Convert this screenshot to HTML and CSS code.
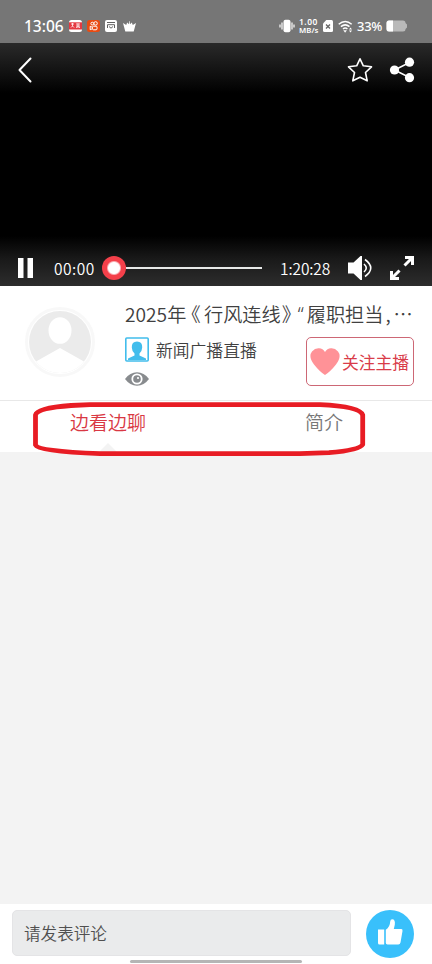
FILE: index.html
```html
<!DOCTYPE html>
<html lang="zh-CN">
<head>
<meta charset="utf-8">
<meta name="viewport" content="width=device-width, initial-scale=1">
<title>新闻广播直播</title>
<link rel="stylesheet" href="styles.css">
</head>
<body>
<div class="app">
  <header class="status">
    <span class="clock">13:06</span>
    <svg class="notif" width="68" height="14" viewBox="0 0 68 14">
      <rect x="0" y="1" width="13" height="12" rx="2.5" fill="#fff"/>
      <rect x="0" y="3.3" width="13" height="7.2" fill="#e53a41"/>
      <path d="M2 5h3M3.5 4v3M2 8.5l1.5-1.5L5 8.5M7 5h4M7 7h4M9 4.5V9M7.3 9l1-1.5M10.8 9l-1-1.5" stroke="#fff" stroke-width=".8" fill="none"/>
      <rect x="18" y="1" width="13" height="12" rx="2.5" fill="#e94b12"/>
      <g fill="none" stroke="#fff" stroke-width="1"><circle cx="23.3" cy="4.6" r="1.4"/><circle cx="26.6" cy="4.4" r="1.7"/><rect x="23.5" y="7.2" width="4.5" height="3.6" rx="1"/><path d="M23.2 8.2l-2-.9v3.4l2-.9"/></g>
      <rect x="36" y="1" width="12" height="12" rx="2" fill="#fff"/>
      <path d="M38 3.5h8M38.500 9V5.700h7V9M40 7.500l2 1.700 2-1.700" stroke="#626262" fill="none"/>
      <path d="M54 4l3.200 2 1-2.500L60 5.300l.3-3.300h.4l.3 3.300 1.800-1.800 1 2.500L67 4l-2.300 8.500h-8.400z" fill="#fff"/>
    </svg>
    <div class="system">
      <svg width="16" height="14" viewBox="0 0 16 14"><rect x="4.500" y=".8" width="7" height="12.400" rx="2" fill="#fff"/><path d="M3 3.500v7M13 3.500v7M1 5.500v3M15 5.500v3" stroke="#fff" stroke-width="1.200"/></svg>
      <div class="speed"><span class="rate">1.00</span><span class="unit">MB/s</span></div>
      <svg class="sim" width="10" height="12" viewBox="0 0 10 12"><path d="M3.300 0H8.500Q10 0 10 1.500v9Q10 12 8.500 12h-7Q0 12 0 10.500V3.500z" fill="#fff"/><path d="M3 4.500l4 4M7 4.500l-4 4" stroke="#666" stroke-width="1.300"/></svg>
      <svg class="wifi" width="16" height="13" viewBox="0 0 16 13"><g fill="none" stroke="#fff" stroke-width="1.500"><path d="M.7 4.200q6.500-5.500 13 0M2.900 6.700q4.300-3.600 8.600 0M5 9q2.200-1.800 4.400 0"/></g><path d="M5.300 10.300h3.600l-1.800 2.400z" fill="#fff"/><path d="M11 9.500l1.500-2L14 9.500zM11 10.500h3l-1.500 2z" fill="#fff"/></svg>
      <span class="percent">33%</span>
      <svg class="battery" width="22" height="12" viewBox="0 0 22 12"><path d="M3 .5h14q2.500 0 2.500 2.500l1.500 1.500v3L19.500 9q0 2.500-2.500 2.500H3Q.5 11.500.5 9V3Q.5.500 3 .5z" fill="#b9b9b9"/><path d="M7 .5H3Q.5.500.5 3v6q0 2.500 2.500 2.500h4z" fill="#fff"/></svg>
    </div>
  </header>

  <section class="player">
    <div class="player-top">
      <svg width="14" height="26" viewBox="0 0 14 26"><path d="M12.500 1.500L1.500 13l11 11.500" fill="none" stroke="#fff" stroke-width="2" stroke-linecap="round" stroke-linejoin="round"/></svg>
      <svg class="star" width="26" height="26" viewBox="0 0 26 26"><path d="M13 1.800l3.300 7 8.200 1-6 5.700 1.700 8.300-7.200-3.600-7.200 3.600 1.700-8.300-6-5.700 8.200-1z" fill="none" stroke="#fff" stroke-width="1.600" stroke-linejoin="round"/></svg>
      <svg class="share" width="26" height="26" viewBox="0 0 26 26"><path d="M20.500 5.500L5.500 13l15 7.500" fill="none" stroke="#fff" stroke-width="1.500"/><g fill="#fff"><circle cx="20.500" cy="5.200" r="4.600"/><circle cx="5.500" cy="13" r="4.600"/><circle cx="20.500" cy="20.700" r="4.600"/></g></svg>
    </div>
    <div class="player-bottom">
      <svg width="16" height="20" viewBox="0 0 16 20"><path d="M0 0h5.500v20H0zM9.500 0H15v20H9.500z" fill="#fff"/></svg>
      <span class="time current">00:00</span>
      <div class="seek"><span class="knob"></span><span class="track"></span></div>
      <span class="time total">1:20:28</span>
      <svg class="volume" width="25" height="24" viewBox="0 0 25 24"><path d="M0 6.500h5.500L12.500 0H14v24h-1.500l-7-6.500H0z" fill="#fff"/><path d="M16 8q4.500 4 0 8M17 3.500q11.500 8.500 0 17" fill="none" stroke="#fff" stroke-width="1.600"/></svg>
      <svg class="expand" width="24" height="24" viewBox="0 0 24 24"><path d="M15 1.500h7.500V9M22 2l-7.500 7.500M1.500 15v7.500H9M2 22l7.500-7.500" fill="none" stroke="#fff" stroke-width="3"/></svg>
    </div>
  </section>

  <section class="info">
    <div class="avatar"><svg width="70" height="70" viewBox="0 0 70 70"><defs><clipPath id="face"><circle cx="35" cy="35" r="31"/></clipPath></defs><circle cx="35" cy="35" r="33.500" fill="#fff" stroke="#f8f8f8" stroke-width="3"/><circle cx="35" cy="35" r="31" fill="#ebebeb"/><ellipse cx="35" cy="23.500" rx="11.500" ry="13.300" fill="#fff"/><path d="M0 64L11 54.500 35 41l24 13.500L70 64v6H0z" fill="#fff" clip-path="url(#face)"/></svg></div>
    <div class="details">
      <h1 class="title"><span class="year">2025年</span><span class="book-open">《</span><span>行风连线</span><span class="book-close">》</span><span class="quote">“</span><span>履职担当</span><span class="comma">,</span><span class="more">…</span></h1>
      <div class="host">
        <div class="meta">
          <div class="channel">
            <svg width="24" height="25" viewBox="0 0 24 25"><rect x=".8" y="1" width="22.400" height="23" rx="1" fill="#fff" stroke="#42bdec" stroke-width="1.600"/><path d="M12 4.500q5.500 0 5.200 6-.2 4-2.700 6v2l6.500 3V23H3v-1.500l6.500-3v-2q-2.500-2-2.700-6-.3-6 5.200-6z" fill="#42bdec"/></svg>
            <span>新闻广播直播</span>
          </div>
          <svg class="eye" width="24" height="14" viewBox="0 0 24 14"><path d="M0 7Q5 .3 12 .3T24 7q-5 6.700-12 6.700T0 7z" fill="#888b8e"/><circle cx="12" cy="7" r="4.700" fill="none" stroke="#fff" stroke-width="1.800"/><circle cx="13" cy="6" r="1.100" fill="#fff"/></svg>
        </div>
        <button class="follow"><svg width="30" height="27" viewBox="0 0 30 27"><path d="M15 27Q10 24 4 16.500-2 8.500 2 3.500 5 0 9 .3q4 .3 6 3.700Q17 .6 21 .3q4-.3 7 3.200 4 5-2 13Q20 24 15 27z" fill="#ff9297"/></svg><span>关注主播</span></button>
      </div>
    </div>
  </section>

  <nav class="tabs">
    <span class="tab active">边看边聊</span>
    <span class="tab">简介</span>
    <svg class="tab-arrow" width="18" height="9" viewBox="0 0 18 9"><path d="M0 9l9-9 9 9z" fill="#f3f3f3"/></svg>
    <svg class="marker" width="340" height="60" viewBox="0 0 340 60"><path d="M5.500 15Q7 8 41 5.500L60 4.700H290Q330 6.500 332.700 15V44.500Q330 50 299 52.700L270 53.700H70Q8 51.500 5.500 45z" fill="none" stroke="#e81c24" stroke-width="4.800" stroke-linejoin="round"/></svg>
  </nav>

  <main class="chat"></main>

  <footer class="composer">
    <div class="input">请发表评论</div>
    <div class="like"><svg width="25" height="26" viewBox="0 0 25 26"><path d="M0 10.500h6.200v15H1.500Q0 25.500 0 24zM7.800 10.700Q12 8 12.200 2.500 12.400.3 14.200.3q3.300 0 2.600 5.500l-1 4.200h7.500q1.500 0 1.200 2l-2 11.500q-.4 2-2.200 2H9.500q-1.700 0-1.700-1.700z" fill="#fff"/></svg></div>
    <span class="home-bar"></span>
  </footer>
</div>
</body>
</html>
```
FILE: styles.css
```css
* { box-sizing: border-box; }
body { margin: 0; font-family: "Noto Sans CJK SC", sans-serif; font-weight: 350; background: #f3f3f3; }
svg { display: block; flex: none; }
span { white-space: nowrap; }
.app { width: 432px; height: 964px; display: flex; flex-direction: column; overflow: hidden; }

.status { height: 43px; flex: none; display: flex; align-items: center; background: #767676; color: #fff; padding: 9px 24px 0; font-family: "Noto Sans", sans-serif; font-weight: 500; }
.clock { width: 45px; font-size: 15.5px; line-height: 20px; }
.system { display: flex; align-items: center; margin-left: 142px; }
.speed { width: 20px; margin-left: 4px; display: flex; flex-direction: column; line-height: 8px; font-weight: 600; }
.rate { font-size: 8.5px; letter-spacing: .5px; }
.unit { font-size: 7.8px; }
.sim { margin-left: 4px; }
.wifi { margin-left: 5px; }
.percent { width: 26px; margin-left: 3px; font-size: 13px; line-height: 18px; letter-spacing: -.3px; }
.battery { margin-left: 3px; }

.player { height: 243px; flex: none; display: flex; flex-direction: column; justify-content: space-between; background: linear-gradient(#2a2a2a 0, #000 50px, #000 193px, #191919 216px, #2d2d2d 243px); }
.player-top { height: 54px; display: flex; align-items: center; padding: 0 17px 0 18px; }
.star { margin-left: auto; }
.share { margin-left: 16px; }
.player-bottom { height: 36px; display: flex; align-items: center; padding: 0 18px; color: #fff; }
.time { font-size: 15.5px; line-height: 20px; }
.current { width: 41px; margin-left: 20px; letter-spacing: .5px; }
.seek { width: 160px; margin-left: 7px; display: flex; align-items: center; }
.knob { width: 24px; height: 24px; flex: none; border-radius: 50%; background: radial-gradient(circle, #fff 5.5px, #f9aab0 6.5px, #f4404a 7.5px); }
.track { height: 2px; flex: 1; background: #e7e9e8; }
.total { width: 50px; margin-left: 18px; letter-spacing: -.1px; }
.volume { margin-left: 18px; }
.expand { margin-left: auto; }

.info { height: 115px; flex: none; display: flex; padding-left: 25px; background: #fff; border-bottom: 1px solid #e8e8e8; color: #404040; }
.avatar { margin-top: 21px; }
.details { width: 289px; margin-left: 30px; }
.title { height: 28px; margin: 14px 0 0; display: flex; font-size: 19.2px; line-height: 28px; font-weight: 350; }
.title span { flex: none; }
.year { width: 66px; }
.book-open { width: 13px; font-feature-settings: "halt"; }
.book-close { width: 17px; padding-left: 1px; font-feature-settings: "halt"; }
.quote { width: 9px; font-family: "Noto Sans", sans-serif; font-weight: 300; }
.comma { width: 10px; padding-left: 2px; }
.more { width: 19px; }
.host { display: flex; justify-content: space-between; }
.meta { margin-top: 9px; }
.channel { height: 25px; display: flex; align-items: center; gap: 7px; font-size: 16.8px; line-height: 25px; }
.channel span { padding-top: 1px; }
.eye { margin-top: 10px; }
.follow { width: 108px; height: 49px; margin-top: 9px; padding: 0 0 0 3px; display: flex; align-items: center; gap: 2px; border: 1px solid #cd6775; border-radius: 5px; background: #fff; color: #d93c49; font: 400 16.8px/24px "Noto Sans CJK SC", sans-serif; }

.tabs { height: 51px; flex: none; position: relative; display: flex; align-items: flex-start; padding: 7px 0 0 70px; gap: 159px; background: #fff; color: #777; }
.tab { font-size: 19px; line-height: 28px; }
.active { color: #d93843; }
.tab-arrow { position: absolute; left: 99px; bottom: 0; }
.marker { position: absolute; left: 30px; top: -1px; }

.chat { flex: 1; background: #f3f3f3; }

.composer { height: 60px; flex: none; position: relative; display: flex; padding: 6px 18px 0 12px; justify-content: space-between; background: #fff; }
.input { width: 339px; height: 46px; padding-left: 11px; border: 1px solid #e4e4e6; border-radius: 5px; background: #eaebec; color: #505050; font-size: 16.6px; line-height: 45px; }
.like { width: 48px; height: 48px; display: flex; align-items: center; justify-content: center; border-radius: 50%; background: #39c0fb; padding-bottom: 4px; }
.home-bar { position: absolute; left: 130px; bottom: 1px; width: 172px; height: 3px; border-radius: 2px; background: #b5b5b5; }
```
